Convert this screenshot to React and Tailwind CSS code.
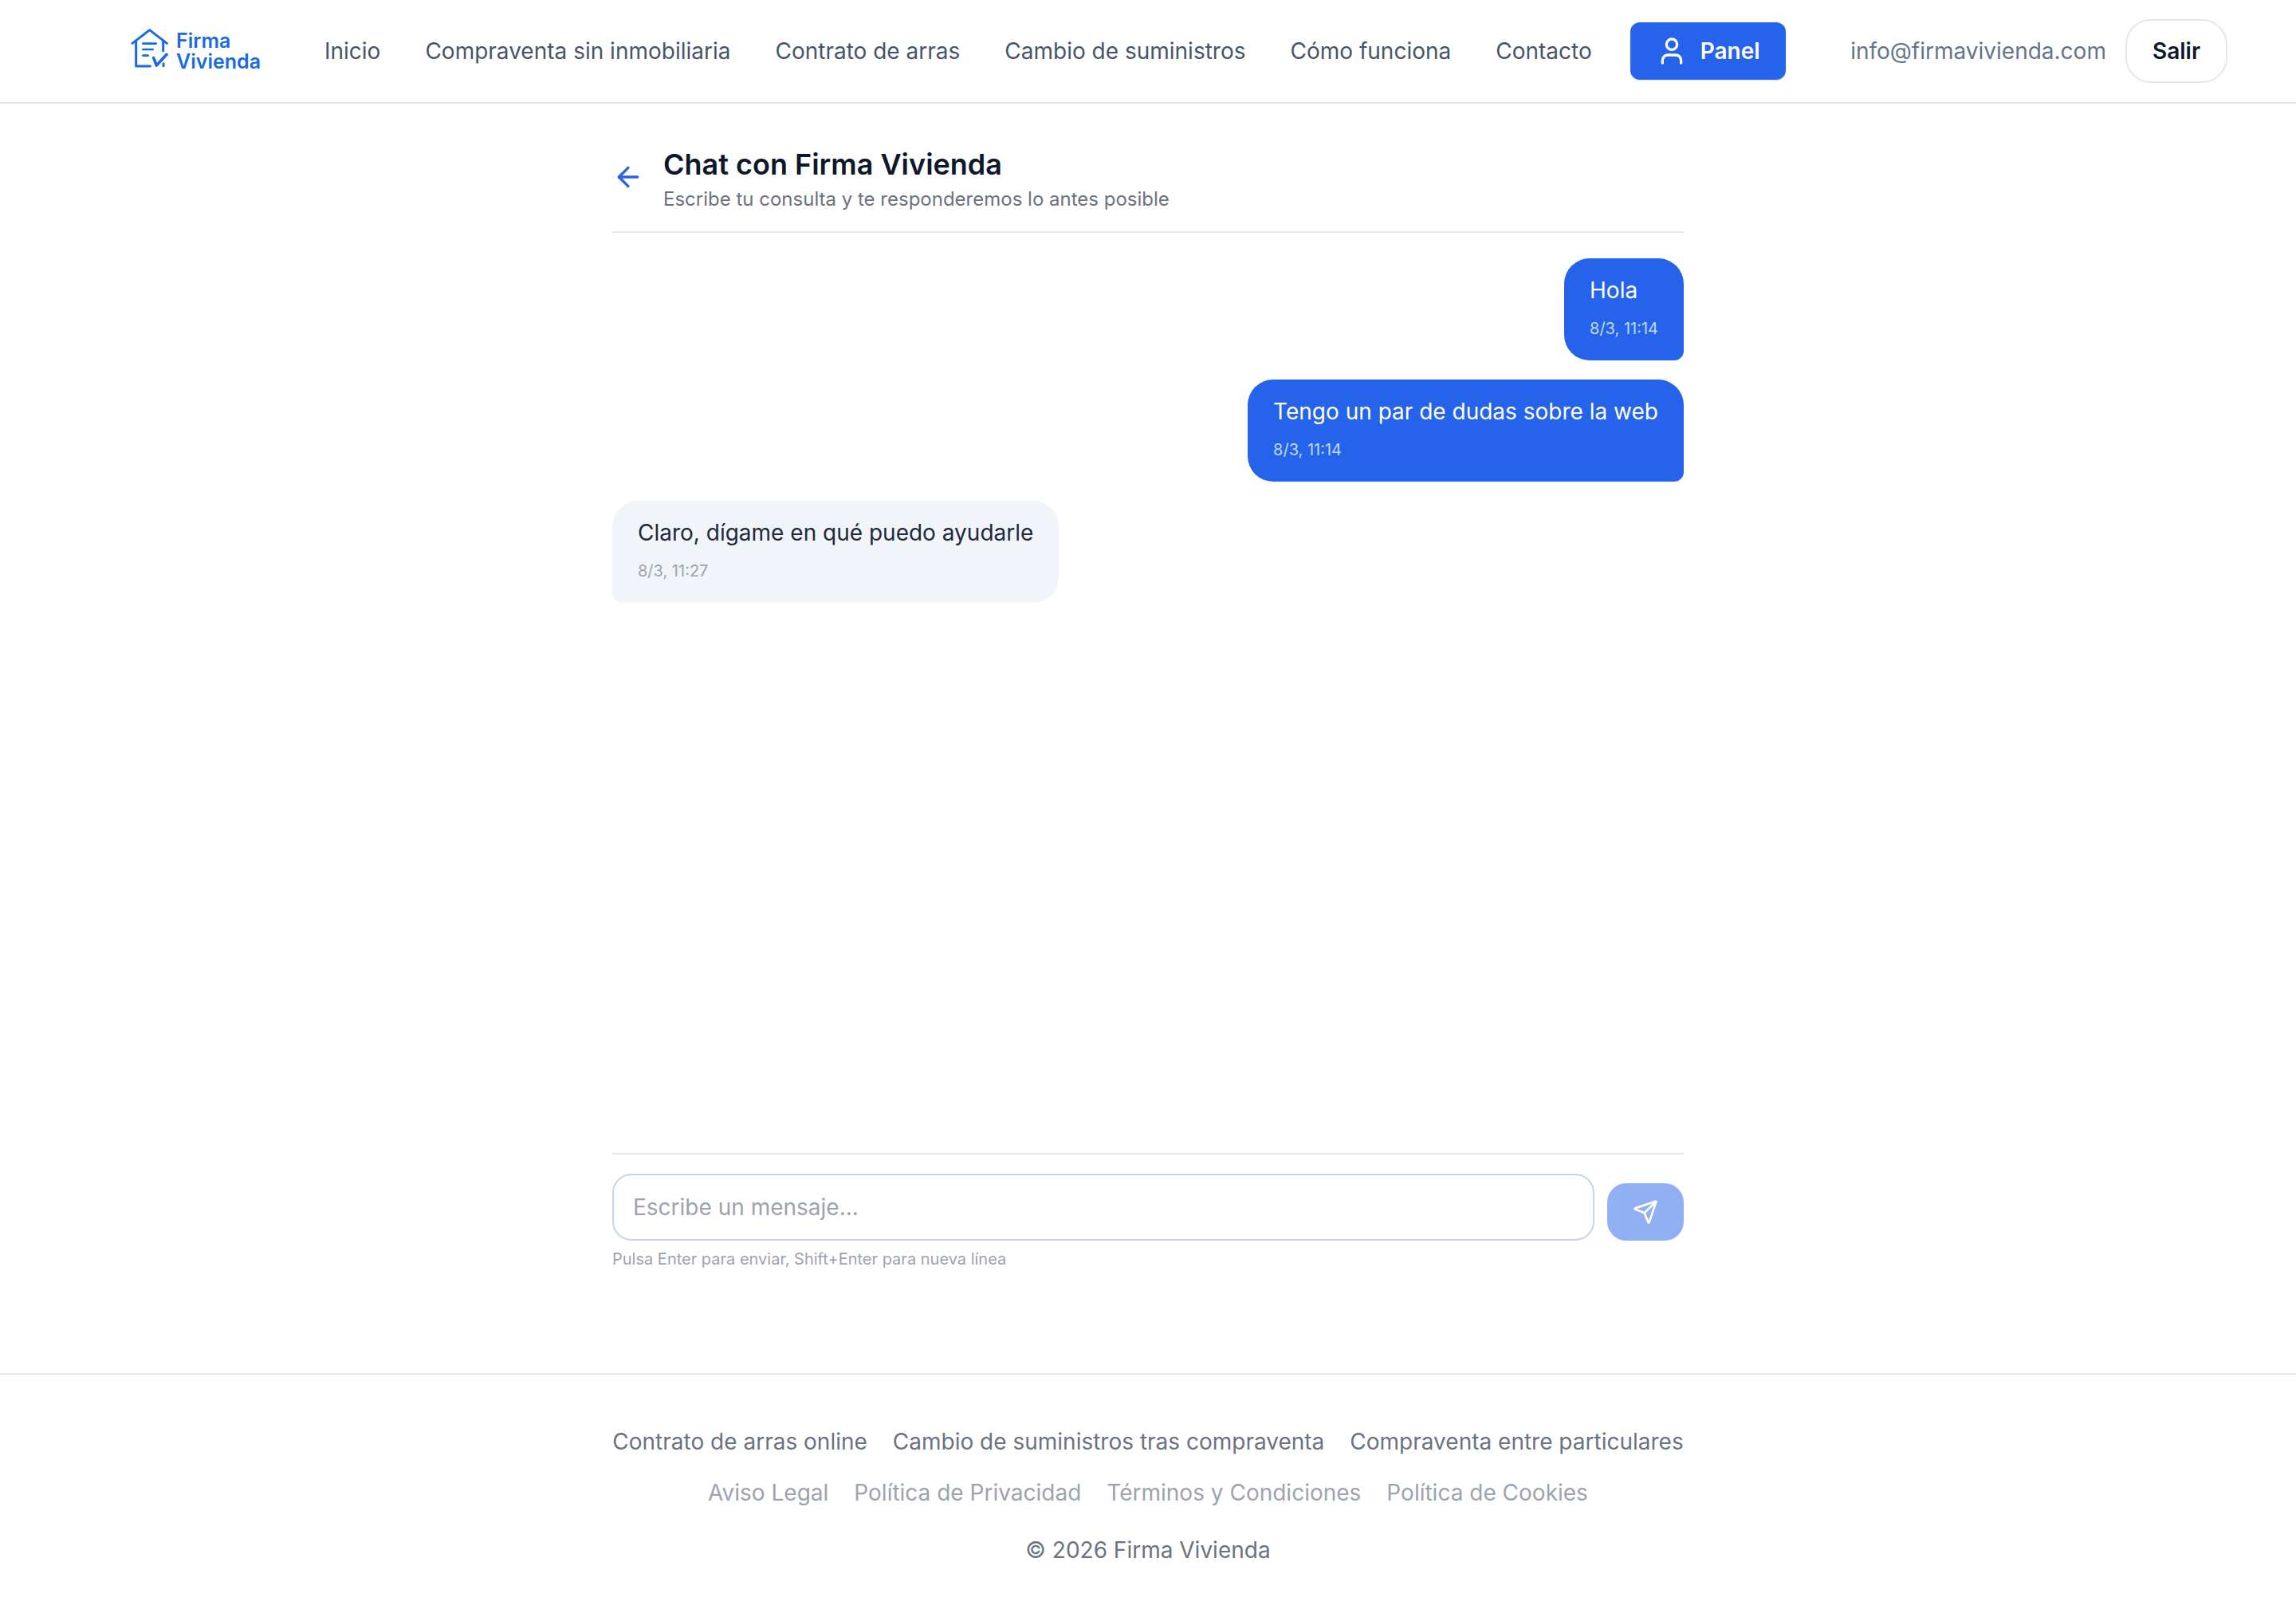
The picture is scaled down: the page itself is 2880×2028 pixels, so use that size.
import { useState } from 'react'
import { ArrowLeft, Send, User } from 'lucide-react'

const NAV_LINKS = [
  'Inicio',
  'Compraventa sin inmobiliaria',
  'Contrato de arras',
  'Cambio de suministros',
  'Cómo funciona',
  'Contacto',
]

const SERVICE_LINKS = [
  'Contrato de arras online',
  'Cambio de suministros tras compraventa',
  'Compraventa entre particulares',
]

const LEGAL_LINKS = [
  'Aviso Legal',
  'Política de Privacidad',
  'Términos y Condiciones',
  'Política de Cookies',
]

const MESSAGES = [
  { id: 1, mine: true, text: 'Hola', time: '8/3, 11:14' },
  { id: 2, mine: true, text: 'Tengo un par de dudas sobre la web', time: '8/3, 11:14' },
  { id: 3, mine: false, text: 'Claro, dígame en qué puedo ayudarle', time: '8/3, 11:27' },
]

function Logo() {
  return (
    <a href="#" className="flex items-center gap-[10px] text-[#1a6be0]">
      <svg
        viewBox="72 45 141 174"
        className="w-[47px] h-[58px]"
        fill="none"
        stroke="currentColor"
        strokeLinecap="round"
        strokeLinejoin="round"
        aria-hidden="true"
      >
        <g strokeWidth="9">
          <path d="M78 103 143 53l65 50" />
          <path d="M92 98v91h53" />
          <path d="M194 94v37" />
          <path d="M195 179v9" />
        </g>
        <path strokeWidth="8" d="M118 104h49M118 126h37M118 149h19" />
        <path strokeWidth="11" d="m158 158 11 28 38-41" />
      </svg>
      <span className="flex flex-col text-[25px] leading-[26px] font-semibold">
        <span>Firma</span>
        <span>Vivienda</span>
      </span>
    </a>
  )
}

function Header() {
  return (
    <header className="flex items-center h-[130px] pl-[164px] pr-[86px] border-b-2 border-[#e2e8f0] bg-white whitespace-nowrap">
      <Logo />
      <nav className="flex items-center gap-14 ml-20 text-[#475569]">
        {NAV_LINKS.map((label) => (
          <a key={label} href="#">{label}</a>
        ))}
      </nav>
      <a
        href="#"
        className="flex items-center gap-4 h-[72px] ml-12 px-8 rounded-xl bg-[#2563eb] text-white font-semibold shadow-sm"
      >
        <User size={40} />
        Panel
      </a>
      <div className="flex items-center gap-6 ml-auto">
        <span className="text-[#64748b]">info@firmavivienda.com</span>
        <button className="h-20 px-8 rounded-[32px] border-2 border-[#e2e8f0] text-[#0f172a] font-semibold">
          Salir
        </button>
      </div>
    </header>
  )
}

function Message({ mine, text, time }) {
  return (
    <div
      className={
        mine
          ? 'self-end px-8 py-5 rounded-[32px] rounded-br-xl bg-[#2563eb] text-white'
          : 'self-start px-8 py-5 rounded-[32px] rounded-bl-xl bg-[#f1f5f9] text-[#1e293b]'
      }
    >
      <p>{text}</p>
      <p className={mine ? 'mt-2 text-[20px] leading-10 text-[#bfdbfe]' : 'mt-2 text-[20px] leading-10 text-[#9ca3af]'}>
        {time}
      </p>
    </div>
  )
}

function Composer() {
  const [draft, setDraft] = useState('')

  return (
    <form className="pt-6 border-t-2 border-[#e2e8f0]" onSubmit={(e) => e.preventDefault()}>
      <div className="flex items-end gap-4">
        <textarea
          rows={1}
          value={draft}
          onChange={(e) => setDraft(e.target.value)}
          aria-label="Escribe un mensaje"
          placeholder="Escribe un mensaje..."
          className="flex-1 h-[84px] px-6 py-5 rounded-3xl border-2 border-[#cbd5e1] bg-white resize-none outline-none placeholder:text-[#9ca3af]"
        />
        <button
          type="submit"
          disabled={!draft.trim()}
          aria-label="Enviar"
          className="px-8 py-5 rounded-3xl bg-[#2563eb] text-white disabled:opacity-50"
        >
          <Send size={32} />
        </button>
      </div>
      <p className="mt-2 text-[20px] leading-[30px] text-[#9ca3af]">
        Pulsa Enter para enviar, Shift+Enter para nueva línea
      </p>
    </form>
  )
}

function Footer() {
  return (
    <footer className="flex flex-col items-center py-16 border-t-2 border-[#e2e8f0] text-[#6b7280]">
      <div className="flex gap-8">
        {SERVICE_LINKS.map((label) => (
          <a key={label} href="#">{label}</a>
        ))}
      </div>
      <div className="flex gap-8 mt-6 text-[#9ca3af]">
        {LEGAL_LINKS.map((label) => (
          <a key={label} href="#">{label}</a>
        ))}
      </div>
      <p className="mt-8">© 2026 Firma Vivienda</p>
    </footer>
  )
}

export default function App() {
  return (
    <div className="flex flex-col min-h-screen bg-white font-['Inter',sans-serif] text-[28px] leading-10">
      <Header />
      <main className="flex flex-1 flex-col w-full max-w-[1344px] mx-auto pt-12 pb-32">
        <div className="flex items-center gap-6 pb-6 border-b-2 border-[#e2e8f0]">
          <a href="#" aria-label="Volver" className="text-[#2563eb]">
            <ArrowLeft size={40} />
          </a>
          <div>
            <h1 className="text-[36px] leading-14 font-semibold text-[#0f172a]">Chat con Firma Vivienda</h1>
            <p className="text-[24px] leading-8 text-[#6b7280]">Escribe tu consulta y te responderemos lo antes posible</p>
          </div>
        </div>
        <div className="flex flex-1 flex-col gap-6 py-8">
          {MESSAGES.map((m) => (
            <Message key={m.id} mine={m.mine} text={m.text} time={m.time} />
          ))}
        </div>
        <Composer />
      </main>
      <Footer />
    </div>
  )
}
